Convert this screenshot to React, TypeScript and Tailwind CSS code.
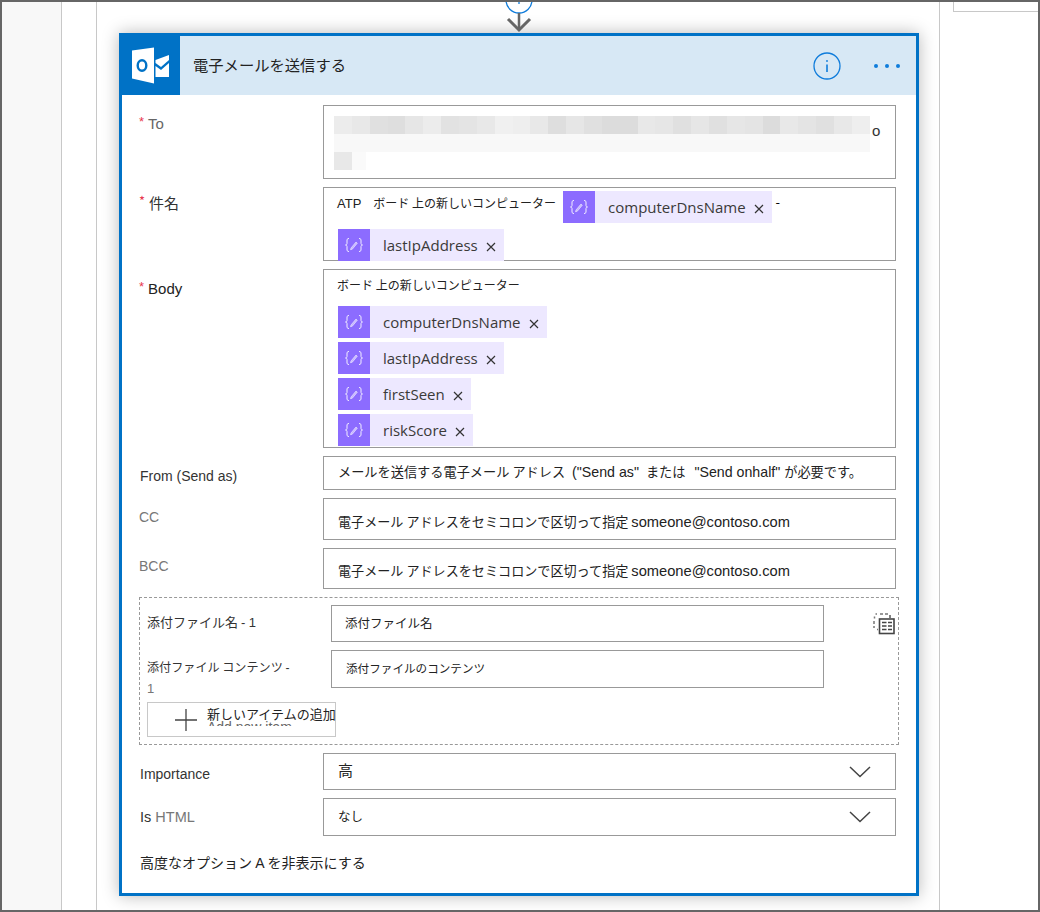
import { ReactNode } from "react";

const jp = "font-['Noto_Sans_CJK_JP','Liberation_Sans',sans-serif]";
const latin = "font-['Open_Sans',sans-serif]";
const arial = "font-['Liberation_Sans',sans-serif]";

const blurRow = ["#ececec","#e8e8e8","#e0e0e0","#dedede","#e6e6e6","#ececec","#e2e2e2","#e4e4e4","#e8e8e8","#f0f0f0","#eeeeee","#e8e8e8","#dedede","#e6e6e6","#e0e0e0","#dcdcdc","#dcdcdc","#e8e8e8","#e6e6e6","#e0e0e0","#e6e6e6","#e0e0e0","#e6e6e6","#e4e4e4","#dcdcdc","#e8e8e8","#e4e4e4","#e0e0e0","#e8e8e8","#eeeeee"];

function TokenIcon() {
  return (
    <svg width="32" height="32" viewBox="0 0 32 32" fill="none" stroke="#fff" strokeWidth="1" opacity="0.9">
      <path d="M11 9.500c-2 0-2 1-2 2.500v2.500c0 1-.8 1.500-1.500 1.500.7 0 1.500.5 1.500 1.500V20c0 1.500 0 2.500 2 2.500" />
      <path d="M21 9.500c2 0 2 1 2 2.500v2.500c0 1 .8 1.500 1.500 1.500-.7 0-1.500.5-1.500 1.500V20c0 1.500 0 2.500-2 2.500" />
      <path d="M13 19l5-6 1.300 1.200-5 6-1.800.5z" fill="#fff" fillOpacity="0.55" strokeWidth="0.6" />
    </svg>
  );
}

function Token({ name }: { name: string }) {
  return (
    <div className="flex h-8 w-fit items-center bg-[#ede8ff]">
      <div className="h-8 w-8 shrink-0 bg-[#8c6cff]"><TokenIcon /></div>
      <span className={`ml-[13px] text-[15px] text-[#3b3a39] ${latin}`}>{name}</span>
      <svg className="mx-[8px] mt-[3px] shrink-0" width="10" height="10" viewBox="0 0 10 10" stroke="#333" strokeWidth="1.200">
        <path d="M1 1l8 8M9 1l-8 8" />
      </svg>
    </div>
  );
}

function Label({ children, className = "" }: { children: ReactNode; className?: string }) {
  return <div className={`w-[184px] shrink-0 ${className}`}>{children}</div>;
}

function Req() {
  return <span className="relative -top-[3px] mr-[4px] text-[13px] text-[#e8384f]">*</span>;
}

function Field({ children, className = "" }: { children: ReactNode; className?: string }) {
  return <div className={`w-[573px] border border-[#999] ${className}`}>{children}</div>;
}

function Chevron() {
  return (
    <svg className="mr-[24px]" width="22" height="12" viewBox="0 0 22 12" fill="none" stroke="#444" strokeWidth="1.500">
      <path d="M1 1l10 9.500L21 1" />
    </svg>
  );
}

function OutlookLogo() {
  return (
    <svg width="40" height="40" viewBox="0 0 40 40">
      <path d="M1 4.500L23 1.500v36L1 32.500z" fill="#fff" />
      <ellipse cx="11" cy="19.500" rx="4.300" ry="5.300" fill="none" stroke="#0072c6" strokeWidth="2.400" />
      <path d="M24.500 14L38 9v5l-8 7-5.500-4z" fill="#fff" />
      <path d="M24.500 20l5.500 4 8-7v14H24.500z" fill="#fff" />
    </svg>
  );
}

function CopyIcon() {
  return (
    <svg width="22" height="22" viewBox="0 0 22 22" fill="none">
      <path d="M1 8v3M1 13v2M4 1H2.500M7 1h3M12 1h3M4 16.500h1M1.500 3.500v2" stroke="#777" strokeWidth="1.500" />
      <path d="M17 2v3" stroke="#555" strokeWidth="1.500" />
      <rect x="6.500" y="6" width="14.500" height="14.500" stroke="#444" strokeWidth="1.600" />
      <path d="M9 9.500h4.500M15 9.500h4M9 13h4.500M15 13h4M9 16.500h4.500M15 16.500h4" stroke="#444" strokeWidth="1.700" />
    </svg>
  );
}

export default function App() {
  return (
    <div className="flex h-[912px] w-[1040px] overflow-hidden border-2 border-[#666] bg-white">
      <div className="w-[60px] shrink-0 border-r border-[#c8c8c8] bg-[#f8f8f8]" />
      <div className="w-[35px] shrink-0 border-r border-[#c8c8c8]" />
      <main className="relative w-[843px] shrink-0 border-r border-[#c8c8c8]">
        <section className="ml-[22px] mt-[31px] h-[863px] w-[800px] border-[3px] border-[#0072c6] shadow-[0_0_16px_rgba(0,0,0,0.28)]">
          <header className={`flex h-[59px] items-center bg-[#d7e8f5] ${jp}`}>
            <div className="flex h-[59px] w-[58px] items-center justify-center bg-[#0072c6]"><OutlookLogo /></div>
            <h1 className="-mt-[2px] ml-[13px] flex-1 text-[15.300px] font-normal text-[#222]">電子メールを送信する</h1>
            <svg className="mr-[33px]" width="28" height="28" viewBox="0 0 28 28" fill="none" stroke="#0f7cdb" strokeWidth="1.300">
              <circle cx="14" cy="14" r="13" />
              <circle cx="14" cy="9" r="0.900" fill="#0f7cdb" stroke="none" />
              <path d="M14 12.500v7.500" strokeWidth="1.600" />
            </svg>
            <div className="mr-[16px] flex gap-[7px]">
              <span className="h-[4px] w-[4px] rounded-full bg-[#0f7cdb]" />
              <span className="h-[4px] w-[4px] rounded-full bg-[#0f7cdb]" />
              <span className="h-[4px] w-[4px] rounded-full bg-[#0f7cdb]" />
            </div>
          </header>

          <div className={`px-[17px] pt-[10px] text-[14px] ${jp}`}>
            <div className="flex">
              <Label className={`pt-[8px] text-[15px] text-[#666] ${arial}`}><Req />To</Label>
              <Field className="relative h-[74px]">
                <div className="absolute left-[10px] top-[10px] flex h-[18px] w-[536px]">
                  {blurRow.map((c, i) => (
                    <div key={i} className="h-full flex-1" style={{ backgroundColor: c }} />
                  ))}
                </div>
                <div className="absolute left-[10px] top-[28px] h-[18px] w-[536px] bg-[#f8f8f8]" />
                <div className="absolute left-[10px] top-[46px] h-[18px] w-[18px] bg-[#e8e8e8]" />
                <div className="absolute left-[28px] top-[46px] h-[18px] w-[14px] bg-[#fafafa]" />
                <span className={`absolute left-[548px] top-[14px] text-[15px] text-[#333] ${arial}`}>o</span>
              </Field>
            </div>

            <div className="mt-[8px] flex">
              <Label className="pt-[5px] text-[15px] text-[#333]"><Req />件名</Label>
              <Field className="h-[74px] pl-[13px]">
                <div className="flex items-start">
                  <span className="mr-[7px] mt-[6px] whitespace-nowrap text-[12px] text-[#222]"><span className={`text-[13px] ${arial}`}>ATP</span>　ボード 上の新しいコンピューター</span>
                  <div className="mt-[3px]"><Token name="computerDnsName" /></div>
                  <span className="ml-[4px] mt-[4px] text-[13px]">-</span>
                </div>
                <div className="ml-[1px] mt-[6px]"><Token name="lastIpAddress" /></div>
              </Field>
            </div>

            <div className="mt-[8px] flex">
              <Label className={`pt-[9px] text-[15px] text-[#222] ${arial}`}><Req />Body</Label>
              <Field className="h-[179px] pl-[13px]">
                <div className="mb-[11px] mt-[5px] text-[12px] leading-[20px] text-[#222]">ボード 上の新しいコンピューター</div>
                <div className="ml-[1px] flex flex-col gap-[4px]">
                  <Token name="computerDnsName" />
                  <Token name="lastIpAddress" />
                  <Token name="firstSeen" />
                  <Token name="riskScore" />
                </div>
              </Field>
            </div>

            <div className="mt-[8px] flex">
              <Label className={`pl-[1px] pt-[10px] text-[14px] text-[#333] ${arial}`}>From (Send as)</Label>
              <Field className="flex h-[34px] items-center whitespace-nowrap pl-[14px] text-[13.200px] text-[#222]">
                <span>メールを送信する電子メール アドレス <span className={`ml-[4px] text-[14.200px] ${arial}`}>("Send as"</span> <span className="ml-[4px]">または</span> <span className={`ml-[6px] text-[14.200px] ${arial}`}>"Send onhalf"</span> <span className="ml-[1px]">が必要です。</span></span>
              </Field>
            </div>

            <div className="mt-[8px] flex">
              <Label className={`pt-[9px] text-[14px] text-[#777] ${arial}`}>CC</Label>
              <Field className="flex h-[42px] items-center whitespace-nowrap pl-[14px] pt-[6px] text-[13.100px] text-[#222]">
                <span>電子メール アドレスをセミコロンで区切って指定 <span className={`text-[14.700px] ${arial}`}>someone@contoso.com</span></span>
              </Field>
            </div>

            <div className="mt-[8px] flex">
              <Label className={`pt-[8px] text-[14px] text-[#777] ${arial}`}>BCC</Label>
              <Field className="flex h-[41px] items-center whitespace-nowrap pl-[14px] pt-[6px] text-[13.100px] text-[#222]">
                <span>電子メール アドレスをセミコロンで区切って指定 <span className={`text-[14.700px] ${arial}`}>someone@contoso.com</span></span>
              </Field>
            </div>

            <div className="relative mt-[8px] h-[148px] w-[760px] border border-dashed border-[#999]">
              <div className="absolute left-[733px] top-[15px]"><CopyIcon /></div>
              <div className="ml-[7px] flex pt-[7px]">
                <div className="w-[184px] shrink-0 pt-[7px] text-[13px] text-[#333]">添付ファイル名 <span className={arial}>- 1</span></div>
                <div className="flex h-[37px] w-[493px] items-center border border-[#999] pl-[13px] text-[12.500px] text-[#222]">添付ファイル名</div>
              </div>
              <div className="ml-[7px] mt-[8px] flex">
                <div className="w-[184px] shrink-0 pt-[7px] text-[12.100px] leading-[20px] text-[#333]">添付ファイル コンテンツ <span className={arial}>-</span><br /><span className={`text-[13px] text-[#777] ${arial}`}>1</span></div>
                <div className="flex h-[38px] w-[493px] items-center border border-[#999] pl-[14px] text-[11.600px] text-[#222]">添付ファイルのコンテンツ</div>
              </div>
              <div className="relative ml-[7px] mt-[3px] flex h-[35px] w-[189px] items-center border border-[#c8c8c8]">
                <svg className="ml-[27px] shrink-0" width="22" height="22" viewBox="0 0 22 22" stroke="#444" strokeWidth="1.300"><path d="M11 0v22M0 11h22" /></svg>
                <span className="relative z-10 mb-[11px] ml-[10px] whitespace-nowrap text-[13px] leading-[18px] text-[#222]">新しいアイテムの追加</span>
                <span className={`absolute left-[59px] top-[17px] h-[6px] overflow-hidden whitespace-nowrap text-[14px] leading-[14px] text-[#666] ${arial}`}>Add new item</span>
              </div>
            </div>

            <div className="mt-[8px] flex">
              <Label className={`pl-[1px] pt-[11px] text-[14px] text-[#333] ${arial}`}>Importance</Label>
              <Field className="flex h-[37px] items-center justify-between pl-[14px] text-[15px] text-[#222]"><span className="-mt-[3px]">高</span><Chevron /></Field>
            </div>

            <div className="mt-[8px] flex">
              <Label className={`pl-[1px] pt-[9px] text-[14.500px] text-[#777] ${arial}`}><span className="text-[#333]">Is</span> HTML</Label>
              <Field className="flex h-[38px] items-center justify-between pl-[14px] text-[12.500px] text-[#222]"><span className="-mt-[2px]">なし</span><Chevron /></Field>
            </div>

            <div className="ml-[1px] mt-[16px] text-[14px] text-[#222]">高度なオプション <span className={arial}>A</span> を非表示にする</div>
          </div>
        </section>

        {/* connector arrow above the card */}
        <div className="absolute left-[408px] -top-[2px]">
          <svg width="28" height="33" viewBox="0 0 28 33" fill="none">
            <circle cx="14" cy="0" r="13" stroke="#0f7cdb" strokeWidth="1.300" />
            <path d="M14 -2v6" stroke="#0f7cdb" strokeWidth="1.300" />
            <path d="M14 13v17" stroke="#666" strokeWidth="2.500" />
            <path d="M3 19l11 11 11-11" stroke="#666" strokeWidth="3" />
          </svg>
        </div>

        <div className="absolute -right-[100px] top-0 h-[10px] w-[86px] border-b border-l border-[#c8c8c8]" />
      </main>
      <div className="flex-1" />
    </div>
  );
}
